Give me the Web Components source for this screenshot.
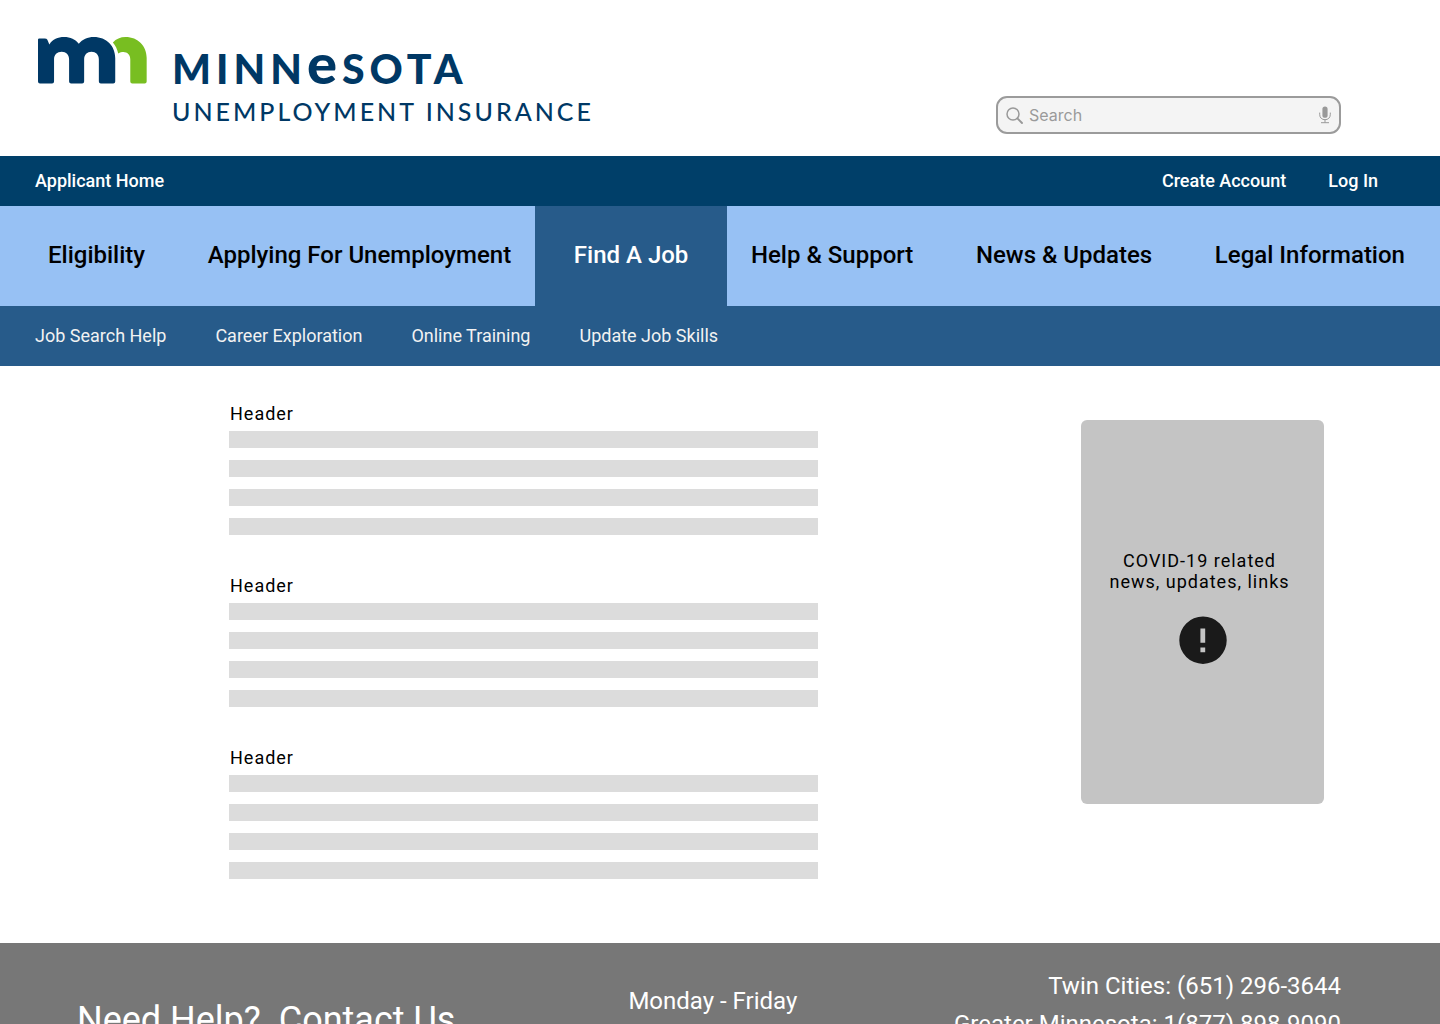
<!DOCTYPE html>
<html lang="en">
<head>
    <meta charset="UTF-8">
    <meta name="viewport" content="width=device-width, initial-scale=1.0">
    <title>Minnesota Unemployment Insurance</title>
    <style>
        body {
            margin: 0;
            background-color: white;
            color: black;
            font-family: Roboto, "Liberation Sans", sans-serif;
            font-size: 18px;
            line-height: 21px;
        }
        main {
            display: grid;
            grid-template-columns: 1fr 243px;
            column-gap: 263px;
            align-items: start;
            padding: 37px 116px 64px 229px;
        }
        .sections {
            display: flex;
            flex-direction: column;
            gap: 40px;
        }
        covid-card {
            margin-top: 17px;
        }
    </style>
</head>
<body>
    <site-header></site-header>
    <utility-bar>
        <a href="#home">Applicant Home</a>
        <a slot="account" href="#create">Create Account</a>
        <a slot="account" href="#login">Log In</a>
    </utility-bar>
    <main-nav>
        <a href="#eligibility">Eligibility</a>
        <a href="#applying">Applying For Unemployment</a>
        <a href="#jobs" aria-current="page">Find A Job</a>
        <a href="#help">Help &amp; Support</a>
        <a href="#news">News &amp; Updates</a>
        <a href="#legal">Legal Information</a>
    </main-nav>
    <sub-nav>
        <a href="#search-help">Job Search Help</a>
        <a href="#career">Career Exploration</a>
        <a href="#training">Online Training</a>
        <a href="#skills">Update Job Skills</a>
    </sub-nav>
    <main>
        <div class="sections">
            <text-section>Header</text-section>
            <text-section>Header</text-section>
            <text-section>Header</text-section>
        </div>
        <covid-card>COVID-19 related<br>news, updates, links</covid-card>
    </main>
    <site-footer>
        <span slot="title">Need Help?&nbsp; Contact Us</span>
        <span slot="hours">Monday - Friday</span>
        <div>Twin Cities: (651) 296-3644</div>
        <div>Greater Minnesota: 1(877) 898-9090</div>
    </site-footer>

    <script>
        class MnLogo extends HTMLElement {
            constructor() {
                super();
                const shadow = this.attachShadow({ mode: 'open' });
                shadow.innerHTML = `
                    <style>
                        :host {
                            display: block;
                            font-family: Lato, sans-serif;
                            color: #003865;
                        }
                        a {
                            display: flex;
                            align-items: flex-start;
                            gap: 25px;
                            color: inherit;
                            text-decoration: none;
                        }
                        svg {
                            width: 109px;
                            height: 47px;
                            flex: none;
                        }
                        .words {
                            display: flex;
                            flex-direction: column;
                            padding-top: 8px;
                            white-space: nowrap;
                        }
                        .state {
                            font-size: 41px;
                            font-weight: 900;
                            line-height: 48px;
                            letter-spacing: 5px;
                        }
                        .state span {
                            font-size: 56px;
                            line-height: 1px;
                        }
                        .agency {
                            font-size: 25px;
                            font-weight: 500;
                            line-height: 36px;
                            letter-spacing: 3px;
                        }
                    </style>
                    <a href="#home">
                        <svg viewBox="54 51 326 140" aria-hidden="true">
                            <path fill="#003865" d="M54 58 Q54 55 58 55 H74 Q80 55 82 59 L88 73 C98 58 113 51 132 51 C151 51 166 58 176 71 C187 58 202 51 221 51 C259 51 285 78 285 114 V184 Q285 190 279 190 H242 Q236 190 236 184 V118 C236 104 227 95 214 95 C201 95 192 104 192 118 V184 Q192 190 186 190 H153 Q147 190 147 184 V118 C147 104 138 95 125 95 C111 95 102 104 102 118 V184 Q102 190 96 190 H60 Q54 190 54 184 Z"/>
                            <path fill="#78be21" d="M278 67 C288 57 300 51 316 51 C353 51 379 78 379 113 V184 Q379 190 373 190 H336 Q330 190 330 184 V118 C330 98 312 90 294 100 C291 87 286 76 278 67 Z"/>
                        </svg>
                        <div class="words">
                            <div class="state">MINN<span>e</span>SOTA</div>
                            <div class="agency">UNEMPLOYMENT INSURANCE</div>
                        </div>
                    </a>
                `;
            }
        }

        class SearchBox extends HTMLElement {
            constructor() {
                super();
                const shadow = this.attachShadow({ mode: 'open' });
                shadow.innerHTML = `
                    <style>
                        :host {
                            display: block;
                        }
                        form {
                            box-sizing: border-box;
                            display: flex;
                            align-items: center;
                            height: 38px;
                            margin: 0;
                            padding: 0 8px;
                            border: 2px solid #9b9b9b;
                            border-radius: 11px;
                            background-color: #f4f4f4;
                        }
                        label, button {
                            display: flex;
                        }
                        input {
                            flex: 1;
                            min-width: 0;
                            padding: 0 6px;
                            border: none;
                            outline: none;
                            background: none;
                            font-family: Inter, sans-serif;
                            font-size: 16px;
                        }
                        input::placeholder {
                            color: #9a9a9a;
                        }
                        button {
                            padding: 0;
                            border: none;
                            background: none;
                        }
                    </style>
                    <form>
                        <label for="query" aria-label="Search">
                            <svg width="17" height="17" viewBox="0 0 17 17" fill="none" stroke="#999" stroke-linecap="round">
                                <circle cx="7" cy="7" r="6" stroke-width="1.5"/>
                                <path d="M11.4 11.4L16 16" stroke-width="1.9"/>
                            </svg>
                        </label>
                        <input id="query" type="text" placeholder="Search">
                        <button type="button" aria-label="Voice search">
                            <svg width="12" height="18" viewBox="0 0 12 18" fill="none" stroke="#999">
                                <rect x="3.4" y="0.5" width="5.2" height="11.3" rx="2.6" fill="#999" stroke="none"/>
                                <path d="M0.7 6.6V8.6C0.7 11.8 3 13.7 6 13.7C9 13.7 11.3 11.8 11.3 8.6V6.6M6 13.7V16.6M2 16.7H10"/>
                            </svg>
                        </button>
                    </form>
                `;
            }
        }

        class SiteHeader extends HTMLElement {
            constructor() {
                super();
                const shadow = this.attachShadow({ mode: 'open' });
                shadow.innerHTML = `
                    <style>
                        :host {
                            display: block;
                        }
                        header {
                            box-sizing: border-box;
                            display: flex;
                            justify-content: space-between;
                            height: 156px;
                            padding: 37px 99px 22px 38px;
                        }
                        search-box {
                            align-self: flex-end;
                            width: 345px;
                        }
                    </style>
                    <header>
                        <mn-logo></mn-logo>
                        <search-box></search-box>
                    </header>
                `;
            }
        }

        class UtilityBar extends HTMLElement {
            constructor() {
                super();
                const shadow = this.attachShadow({ mode: 'open' });
                shadow.innerHTML = `
                    <style>
                        :host {
                            display: block;
                            background-color: #003f69;
                            font-weight: 500;
                        }
                        nav {
                            display: flex;
                            align-items: center;
                            justify-content: space-between;
                            height: 48px;
                            padding: 0 62px 2px 35px;
                        }
                        .account {
                            display: flex;
                            gap: 42px;
                        }
                        ::slotted(a) {
                            color: white;
                            text-decoration: none;
                        }
                    </style>
                    <nav aria-label="Account">
                        <slot></slot>
                        <div class="account"><slot name="account"></slot></div>
                    </nav>
                `;
            }
        }

        class MainNav extends HTMLElement {
            constructor() {
                super();
                const shadow = this.attachShadow({ mode: 'open' });
                shadow.innerHTML = `
                    <style>
                        :host {
                            display: block;
                            background-color: #97c1f4;
                            font-size: 24px;
                            font-weight: 500;
                            white-space: nowrap;
                        }
                        nav {
                            display: flex;
                            justify-content: space-between;
                            padding: 0 35px 0 48px;
                        }
                        ::slotted(a) {
                            color: black;
                            line-height: 98px;
                            padding-bottom: 2px;
                            text-decoration: none;
                        }
                        /* the open tab reaches into the gaps beside it */
                        ::slotted(a[aria-current]) {
                            margin: 0 -39px;
                            padding: 0 39px 2px;
                            background-color: #275b8a;
                            color: white;
                        }
                    </style>
                    <nav aria-label="Main"><slot></slot></nav>
                `;
            }
        }

        class SubNav extends HTMLElement {
            constructor() {
                super();
                const shadow = this.attachShadow({ mode: 'open' });
                shadow.innerHTML = `
                    <style>
                        :host {
                            display: block;
                            background-color: #275b8a;
                        }
                        nav {
                            display: flex;
                            align-items: center;
                            gap: 49px;
                            height: 58px;
                            padding: 0 35px 2px;
                        }
                        ::slotted(a) {
                            color: #f2f2f2;
                            text-decoration: none;
                        }
                    </style>
                    <nav aria-label="Find A Job"><slot></slot></nav>
                `;
            }
        }

        class TextSection extends HTMLElement {
            constructor() {
                super();
                const shadow = this.attachShadow({ mode: 'open' });
                shadow.innerHTML = `
                    <style>
                        :host {
                            display: block;
                        }
                        h2 {
                            margin: 0 0 7px;
                            padding-left: 1px;
                            font-size: 18px;
                            font-weight: 400;
                            line-height: 21px;
                            letter-spacing: 1px;
                        }
                        .lines {
                            display: grid;
                            gap: 12px;
                        }
                        .lines div {
                            height: 17px;
                            background-color: #dcdcdc;
                        }
                    </style>
                    <h2><slot></slot></h2>
                    <div class="lines">
                        <div></div>
                        <div></div>
                        <div></div>
                        <div></div>
                    </div>
                `;
            }
        }

        class CovidCard extends HTMLElement {
            constructor() {
                super();
                const shadow = this.attachShadow({ mode: 'open' });
                shadow.innerHTML = `
                    <style>
                        :host {
                            display: block;
                        }
                        aside {
                            box-sizing: border-box;
                            display: flex;
                            flex-direction: column;
                            align-items: center;
                            gap: 24px;
                            min-height: 384px;
                            padding: 130px 20px 24px;
                            border-radius: 6px;
                            background-color: #c4c4c4;
                        }
                        p {
                            margin: 0;
                            padding-right: 6px;
                            text-align: center;
                            letter-spacing: 1px;
                        }
                    </style>
                    <aside>
                        <p><slot></slot></p>
                        <svg width="48" height="48" viewBox="0 0 48 48" aria-hidden="true">
                            <path fill="#1a1a1a" fill-rule="evenodd" d="M24 0.5a23.7 23.7 0 1 0 0 47.4a23.7 23.7 0 1 0 0-47.4zM21.4 12.4h4.8v14.4h-4.8zM21.4 31.4h4.8v4.8h-4.8z"/>
                        </svg>
                    </aside>
                `;
            }
        }

        class SiteFooter extends HTMLElement {
            constructor() {
                super();
                const shadow = this.attachShadow({ mode: 'open' });
                shadow.innerHTML = `
                    <style>
                        :host {
                            display: block;
                            background-color: #777777;
                            color: white;
                            font-size: 24px;
                            line-height: 38px;
                            white-space: nowrap;
                        }
                        footer {
                            display: flex;
                            align-items: flex-start;
                            padding: 24px 99px 24px 77px;
                        }
                        h2 {
                            margin: 32px 173px 0 0;
                            font-size: 36px;
                            font-weight: 400;
                            line-height: 42px;
                        }
                        .hours {
                            margin-top: 15px;
                        }
                        .phones {
                            margin-left: auto;
                            text-align: right;
                        }
                    </style>
                    <footer>
                        <h2><slot name="title"></slot></h2>
                        <div class="hours"><slot name="hours"></slot></div>
                        <div class="phones"><slot></slot></div>
                    </footer>
                `;
            }
        }

        customElements.define('mn-logo', MnLogo);
        customElements.define('search-box', SearchBox);
        customElements.define('site-header', SiteHeader);
        customElements.define('utility-bar', UtilityBar);
        customElements.define('main-nav', MainNav);
        customElements.define('sub-nav', SubNav);
        customElements.define('text-section', TextSection);
        customElements.define('covid-card', CovidCard);
        customElements.define('site-footer', SiteFooter);
    </script>
</body>
</html>
